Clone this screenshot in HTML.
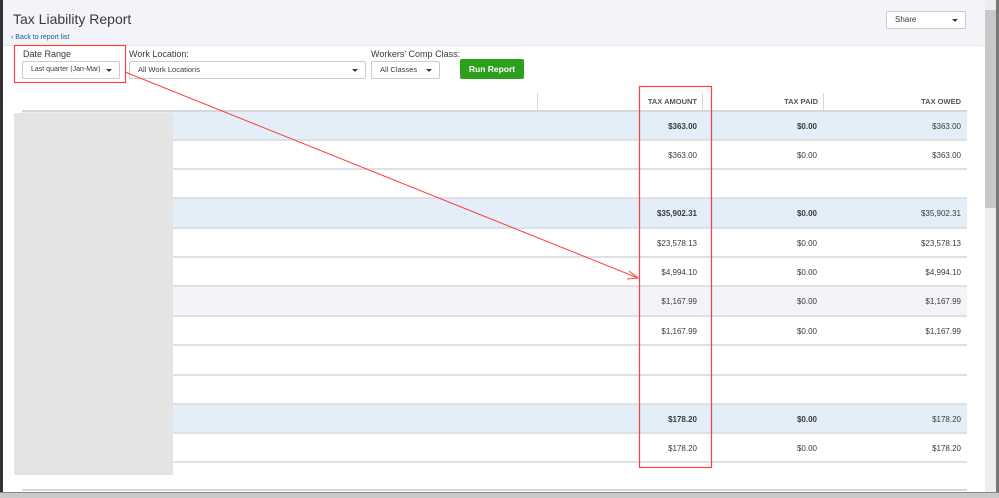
<!DOCTYPE html>
<html><head><meta charset="utf-8"><style>
*{margin:0;padding:0;box-sizing:border-box}
body{width:999px;height:498px;position:relative;overflow:hidden;background:#fff;font-family:"Liberation Sans",sans-serif;color:#393a3d}
.a{position:absolute}
.hdr{left:0;top:0;width:985px;height:46px;background:#f3f4f7;border-bottom:1px solid #e6e8ec}
.sel{position:absolute;height:18px;border:1px solid #c9cbcf;border-radius:2px;background:#fff;font-size:7.5px;line-height:16px;padding-left:8px;white-space:nowrap;overflow:hidden}
.sel:after{content:"";position:absolute;right:7px;top:7px;border-left:3px solid transparent;border-right:3px solid transparent;border-top:3px solid #393a3d}
.lbl{font-size:9px;color:#393a3d}
.row{position:absolute;left:22px;width:945px;height:29px;border-bottom:2px solid #dde0e5}
.c{position:absolute;top:10px;font-size:8px;text-align:right;width:100px}
.b{font-weight:bold}
.th{position:absolute;top:97px;font-size:7.5px;font-weight:bold;color:#555;text-align:right;width:100px}
</style></head><body>
<div class="a hdr"></div>
<div class="a" style="left:0;top:0;width:3px;height:498px;background:#333"></div>
<div class="a" style="left:13px;top:11px;font-size:14px;color:#393a3d">Tax Liability Report</div>
<div class="a" style="left:11px;top:34px;font-size:7px;color:#0d5c9e">‹ Back to report list</div>
<div class="sel" style="left:886px;top:11px;width:80px;height:18px;font-size:8px">Share</div>

<div class="a lbl" style="left:23px;top:49px">Date Range</div>
<div class="sel" style="left:22px;top:61px;width:98px;font-size:7px;padding-left:8px">Last quarter (Jan-Mar)</div>
<div class="a lbl" style="left:129px;top:49px">Work Location:</div>
<div class="sel" style="left:129px;top:61px;width:237px">All Work Locations</div>
<div class="a lbl" style="left:371px;top:49px">Workers' Comp Class:</div>
<div class="sel" style="left:371px;top:61px;width:69px">All Classes</div>
<div class="a" style="left:460px;top:59px;width:64px;height:20px;background:#2ca01c;border-radius:2px;color:#fff;font-size:8.5px;font-weight:bold;text-align:center;line-height:20px">Run Report</div>

<div class="a" style="left:22px;top:110px;width:945px;height:2px;background:#d4d7dc"></div>
<div class="a" style="left:537px;top:93px;width:1px;height:17px;background:#d4d7dc"></div>
<div class="a" style="left:702px;top:93px;width:1px;height:17px;background:#d4d7dc"></div>
<div class="a" style="left:823px;top:93px;width:1px;height:17px;background:#d4d7dc"></div>
<div class="th" style="left:597px">TAX AMOUNT</div>
<div class="th" style="left:718px">TAX PAID</div>
<div class="th" style="left:861px">TAX OWED</div>

<div class="row" style="top:112px;background:#e3eef8"><div class="c b" style="left:575px">$363.00</div><div class="c b" style="left:695px">$0.00</div><div class="c" style="left:839px">$363.00</div></div>
<div class="row" style="top:141px"><div class="c" style="left:575px">$363.00</div><div class="c" style="left:695px">$0.00</div><div class="c" style="left:839px">$363.00</div></div>
<div class="row" style="top:170px"></div>
<div class="row" style="top:199px;height:30px;background:#e3eef8"><div class="c b" style="left:575px">$35,902.31</div><div class="c b" style="left:695px">$0.00</div><div class="c" style="left:839px">$35,902.31</div></div>
<div class="row" style="top:229px"><div class="c" style="left:575px">$23,578.13</div><div class="c" style="left:695px">$0.00</div><div class="c" style="left:839px">$23,578.13</div></div>
<div class="row" style="top:258px"><div class="c" style="left:575px">$4,994.10</div><div class="c" style="left:695px">$0.00</div><div class="c" style="left:839px">$4,994.10</div></div>
<div class="row" style="top:287px;height:30px;background:#f3f4f7"><div class="c" style="left:575px">$1,167.99</div><div class="c" style="left:695px">$0.00</div><div class="c" style="left:839px">$1,167.99</div></div>
<div class="row" style="top:317px"><div class="c" style="left:575px">$1,167.99</div><div class="c" style="left:695px">$0.00</div><div class="c" style="left:839px">$1,167.99</div></div>
<div class="row" style="top:346px;height:30px"></div>
<div class="row" style="top:376px"></div>
<div class="row" style="top:405px;background:#e3eef8"><div class="c b" style="left:575px">$178.20</div><div class="c b" style="left:695px">$0.00</div><div class="c" style="left:839px">$178.20</div></div>
<div class="row" style="top:434px"><div class="c" style="left:575px">$178.20</div><div class="c" style="left:695px">$0.00</div><div class="c" style="left:839px">$178.20</div></div>

<div class="a" style="left:14px;top:113px;width:159px;height:362px;background:#e4e4e4"></div>
<div class="a" style="left:22px;top:489px;width:945px;height:2px;background:#d4d7dc"></div>

<div class="a" style="left:985px;top:0;width:11px;height:498px;background:#eee"></div>
<div class="a" style="left:985px;top:10px;width:11px;height:198px;background:#c8c8c8"></div>
<div class="a" style="left:996px;top:0;width:3px;height:498px;background:#777"></div>
<div class="a" style="left:0;top:492px;width:999px;height:6px;background:#c9c9c9;border-top:1px solid #888"></div>

<svg class="a" style="left:0;top:0;z-index:5" width="999" height="498">
<rect x="14.5" y="45.5" width="111" height="37" fill="none" stroke="#ff4040" stroke-width="1.2"/>
<rect x="639.5" y="86.5" width="72" height="381" fill="none" stroke="#ff4040" stroke-width="1.2"/>
<line x1="125" y1="72" x2="638" y2="278" stroke="#ff4040" stroke-width="1"/>
<path d="M629 271 L638 278 L627 279" fill="none" stroke="#ff4040" stroke-width="1"/>
</svg>
</body></html>
